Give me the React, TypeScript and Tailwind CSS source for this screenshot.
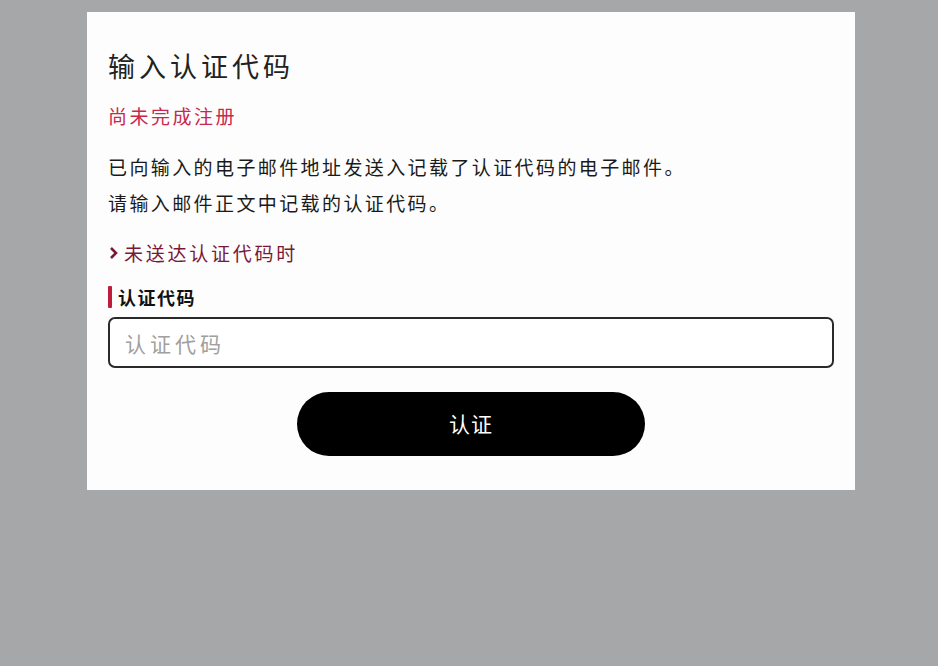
import { useState } from "react";

const font = { fontFamily: '"Noto Sans CJK SC", "Noto Sans", sans-serif' };

export default function App() {
  const [code, setCode] = useState("");

  return (
    <div className="min-h-[666px] w-full bg-[#a6a7a9] pt-[12px]" style={font}>
      <div className="ml-[87px] w-[768px] bg-[#fdfdfd] px-[21px] pt-[34px] pb-[34px]">
        {/* Title */}
        <h1 className="text-[27px] leading-[40px] tracking-[4px] text-[#222] font-normal">输入认证代码</h1>

        <p className="mt-[16px] text-[19px] leading-[28px] tracking-[2.5px] text-[#c8284c]">尚未完成注册</p>

        <div className="mt-[19px] text-[19px] leading-[36px] tracking-[2.4px] text-[#1a1a1a]">
          <p>已向输入的电子邮件地址发送入记载了认证代码的电子邮件。</p>
          <p>请输入邮件正文中记载的认证代码。</p>
        </div>

        {/* Link */}
        <a href="#" className="mt-[18px] flex items-center text-[19px] leading-[28px] tracking-[2.75px] text-[#7a1838]">
          <svg width="12" height="14" viewBox="0 0 12 14" className="mr-[4px]">
            <path d="M3 2 L8 7 L3 12" fill="none" stroke="#7a1838" strokeWidth="2.6" />
          </svg>
          未送达认证代码时
        </a>

        {/* Label */}
        <div className="mt-[18px] flex items-center">
          <span className="h-[22px] w-[4px] rounded-[1px] bg-[#c01c3c]" />
          <span className="ml-[6px] text-[18px] font-bold leading-[24px] tracking-[1.5px] text-[#111]">认证代码</span>
        </div>

        <input
          value={code}
          onChange={(e) => setCode(e.target.value)}
          placeholder="认证代码"
          className="mt-[8px] h-[51px] w-full rounded-[7px] border-2 border-[#2a2a2a] bg-white px-[15px] text-[21px] tracking-[4px] text-[#222] placeholder:text-[#a0a0a0] outline-none"
        />

        <div className="mt-[24px] flex justify-center">
          <button className="h-[64px] w-[348px] rounded-full bg-black text-[21px] tracking-[1px] text-white">认证</button>
        </div>
      </div>
    </div>
  );
}
